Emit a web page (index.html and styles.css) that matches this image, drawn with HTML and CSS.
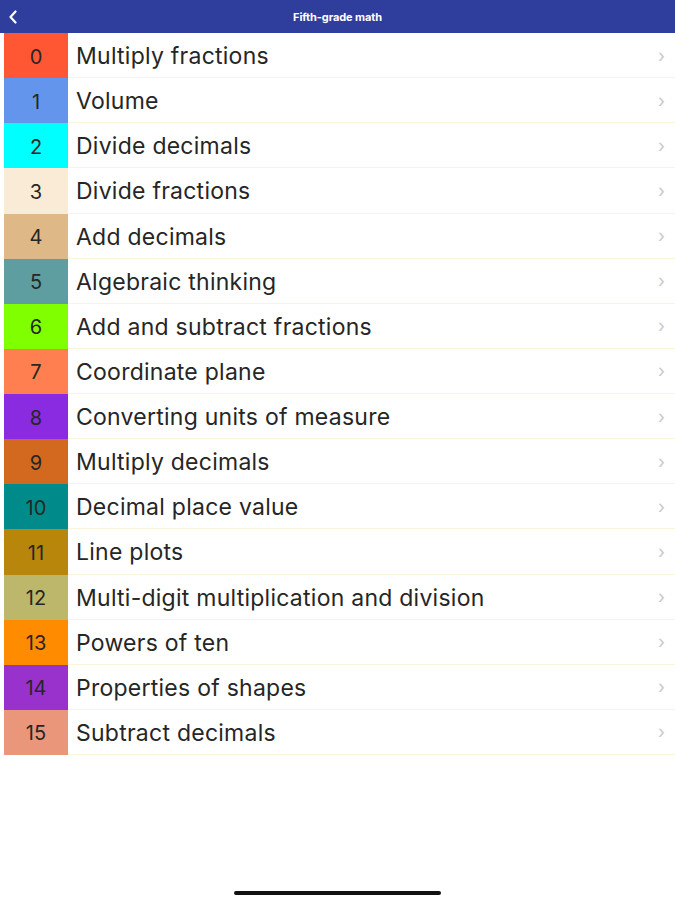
FILE: index.html
```html
<!DOCTYPE html>
<html>
<head>
<meta charset="utf-8">
<link rel="stylesheet" href="styles.css">
</head>
<body>
<header class="nav">
  <svg class="back" width="10" height="14" viewBox="0 0 10 14"><path d="M7.5 1.5 L2.5 7 L7.5 12.5" fill="none" stroke="#fff" stroke-width="2.2" stroke-linecap="round" stroke-linejoin="round"/></svg>
  <div class="title">Fifth-grade math</div>
</header>
<ul class="list">
  <li class="row"><span class="num c0">0</span><span class="label">Multiply fractions</span><span class="chev">›</span></li>
  <li class="row"><span class="num c1">1</span><span class="label">Volume</span><span class="chev">›</span></li>
  <li class="row"><span class="num c2">2</span><span class="label">Divide decimals</span><span class="chev">›</span></li>
  <li class="row"><span class="num c3">3</span><span class="label">Divide fractions</span><span class="chev">›</span></li>
  <li class="row"><span class="num c4">4</span><span class="label">Add decimals</span><span class="chev">›</span></li>
  <li class="row"><span class="num c5">5</span><span class="label">Algebraic thinking</span><span class="chev">›</span></li>
  <li class="row"><span class="num c6">6</span><span class="label">Add and subtract fractions</span><span class="chev">›</span></li>
  <li class="row"><span class="num c7">7</span><span class="label">Coordinate plane</span><span class="chev">›</span></li>
  <li class="row"><span class="num c8">8</span><span class="label">Converting units of measure</span><span class="chev">›</span></li>
  <li class="row"><span class="num c9">9</span><span class="label">Multiply decimals</span><span class="chev">›</span></li>
  <li class="row"><span class="num c10">10</span><span class="label">Decimal place value</span><span class="chev">›</span></li>
  <li class="row"><span class="num c11">11</span><span class="label">Line plots</span><span class="chev">›</span></li>
  <li class="row"><span class="num c12">12</span><span class="label">Multi-digit multiplication and division</span><span class="chev">›</span></li>
  <li class="row"><span class="num c13">13</span><span class="label">Powers of ten</span><span class="chev">›</span></li>
  <li class="row"><span class="num c14">14</span><span class="label">Properties of shapes</span><span class="chev">›</span></li>
  <li class="row"><span class="num c15">15</span><span class="label">Subtract decimals</span><span class="chev">›</span></li>
</ul>
<div class="home-indicator"></div>
</body>
</html>
```

FILE: styles.css
```css
html, body {
  margin: 0;
  padding: 0;
  background: #fff;
  font-family: Inter, "Liberation Sans", Arial, sans-serif;
}
.nav {
  height: 33px;
  background: #2f3d9c;
  display: flex;
  align-items: center;
  position: relative;
}
.back {
  position: absolute;
  left: 8px;
  top: 10px;
}
.title {
  flex: 1;
  text-align: center;
  color: #fff;
  font-size: 11px;
  font-weight: 700;
  letter-spacing: -0.1px;
}
.list {
  list-style: none;
  margin: 0;
  padding: 0 0 0 4px;
}
.row {
  display: flex;
  align-items: stretch;
  height: 45.14px;
}
.num {
  width: 64px;
  flex: none;
  display: flex;
  align-items: center;
  justify-content: center;
  font-size: 20px;
  color: #262626;
  padding-top: 2px;
}
.label {
  flex: 1;
  display: flex;
  align-items: center;
  padding-left: 8px;
  font-size: 23px;
  font-weight: 400;
  letter-spacing: 0.25px;
  color: #262626;
  border-bottom: 1px solid #fcf4de;
  padding-top: 2px;
}
.chev {
  display: flex;
  align-items: center;
  padding-right: 10px;
  color: #c8c8cc;
  font-size: 18px;
  border-bottom: 1px solid #fcf4de;
}
.c0 { background: #ff5733; }
.c1 { background: #6495ed; }
.c2 { background: #00ffff; }
.c3 { background: #faebd7; }
.c4 { background: #deb887; }
.c5 { background: #5f9ea0; }
.c6 { background: #7fff00; }
.c7 { background: #ff7f50; }
.c8 { background: #8a2be2; }
.c9 { background: #d2691e; }
.c10 { background: #008b8b; }
.c11 { background: #b8860b; }
.c12 { background: #bdb76b; }
.c13 { background: #ff8c00; }
.c14 { background: #9932cc; }
.c15 { background: #e9967a; }
.home-indicator {
  position: fixed;
  left: 234px;
  width: 207px;
  bottom: 5px;
  height: 4px;
  border-radius: 2px;
  background: #111;
}
```
